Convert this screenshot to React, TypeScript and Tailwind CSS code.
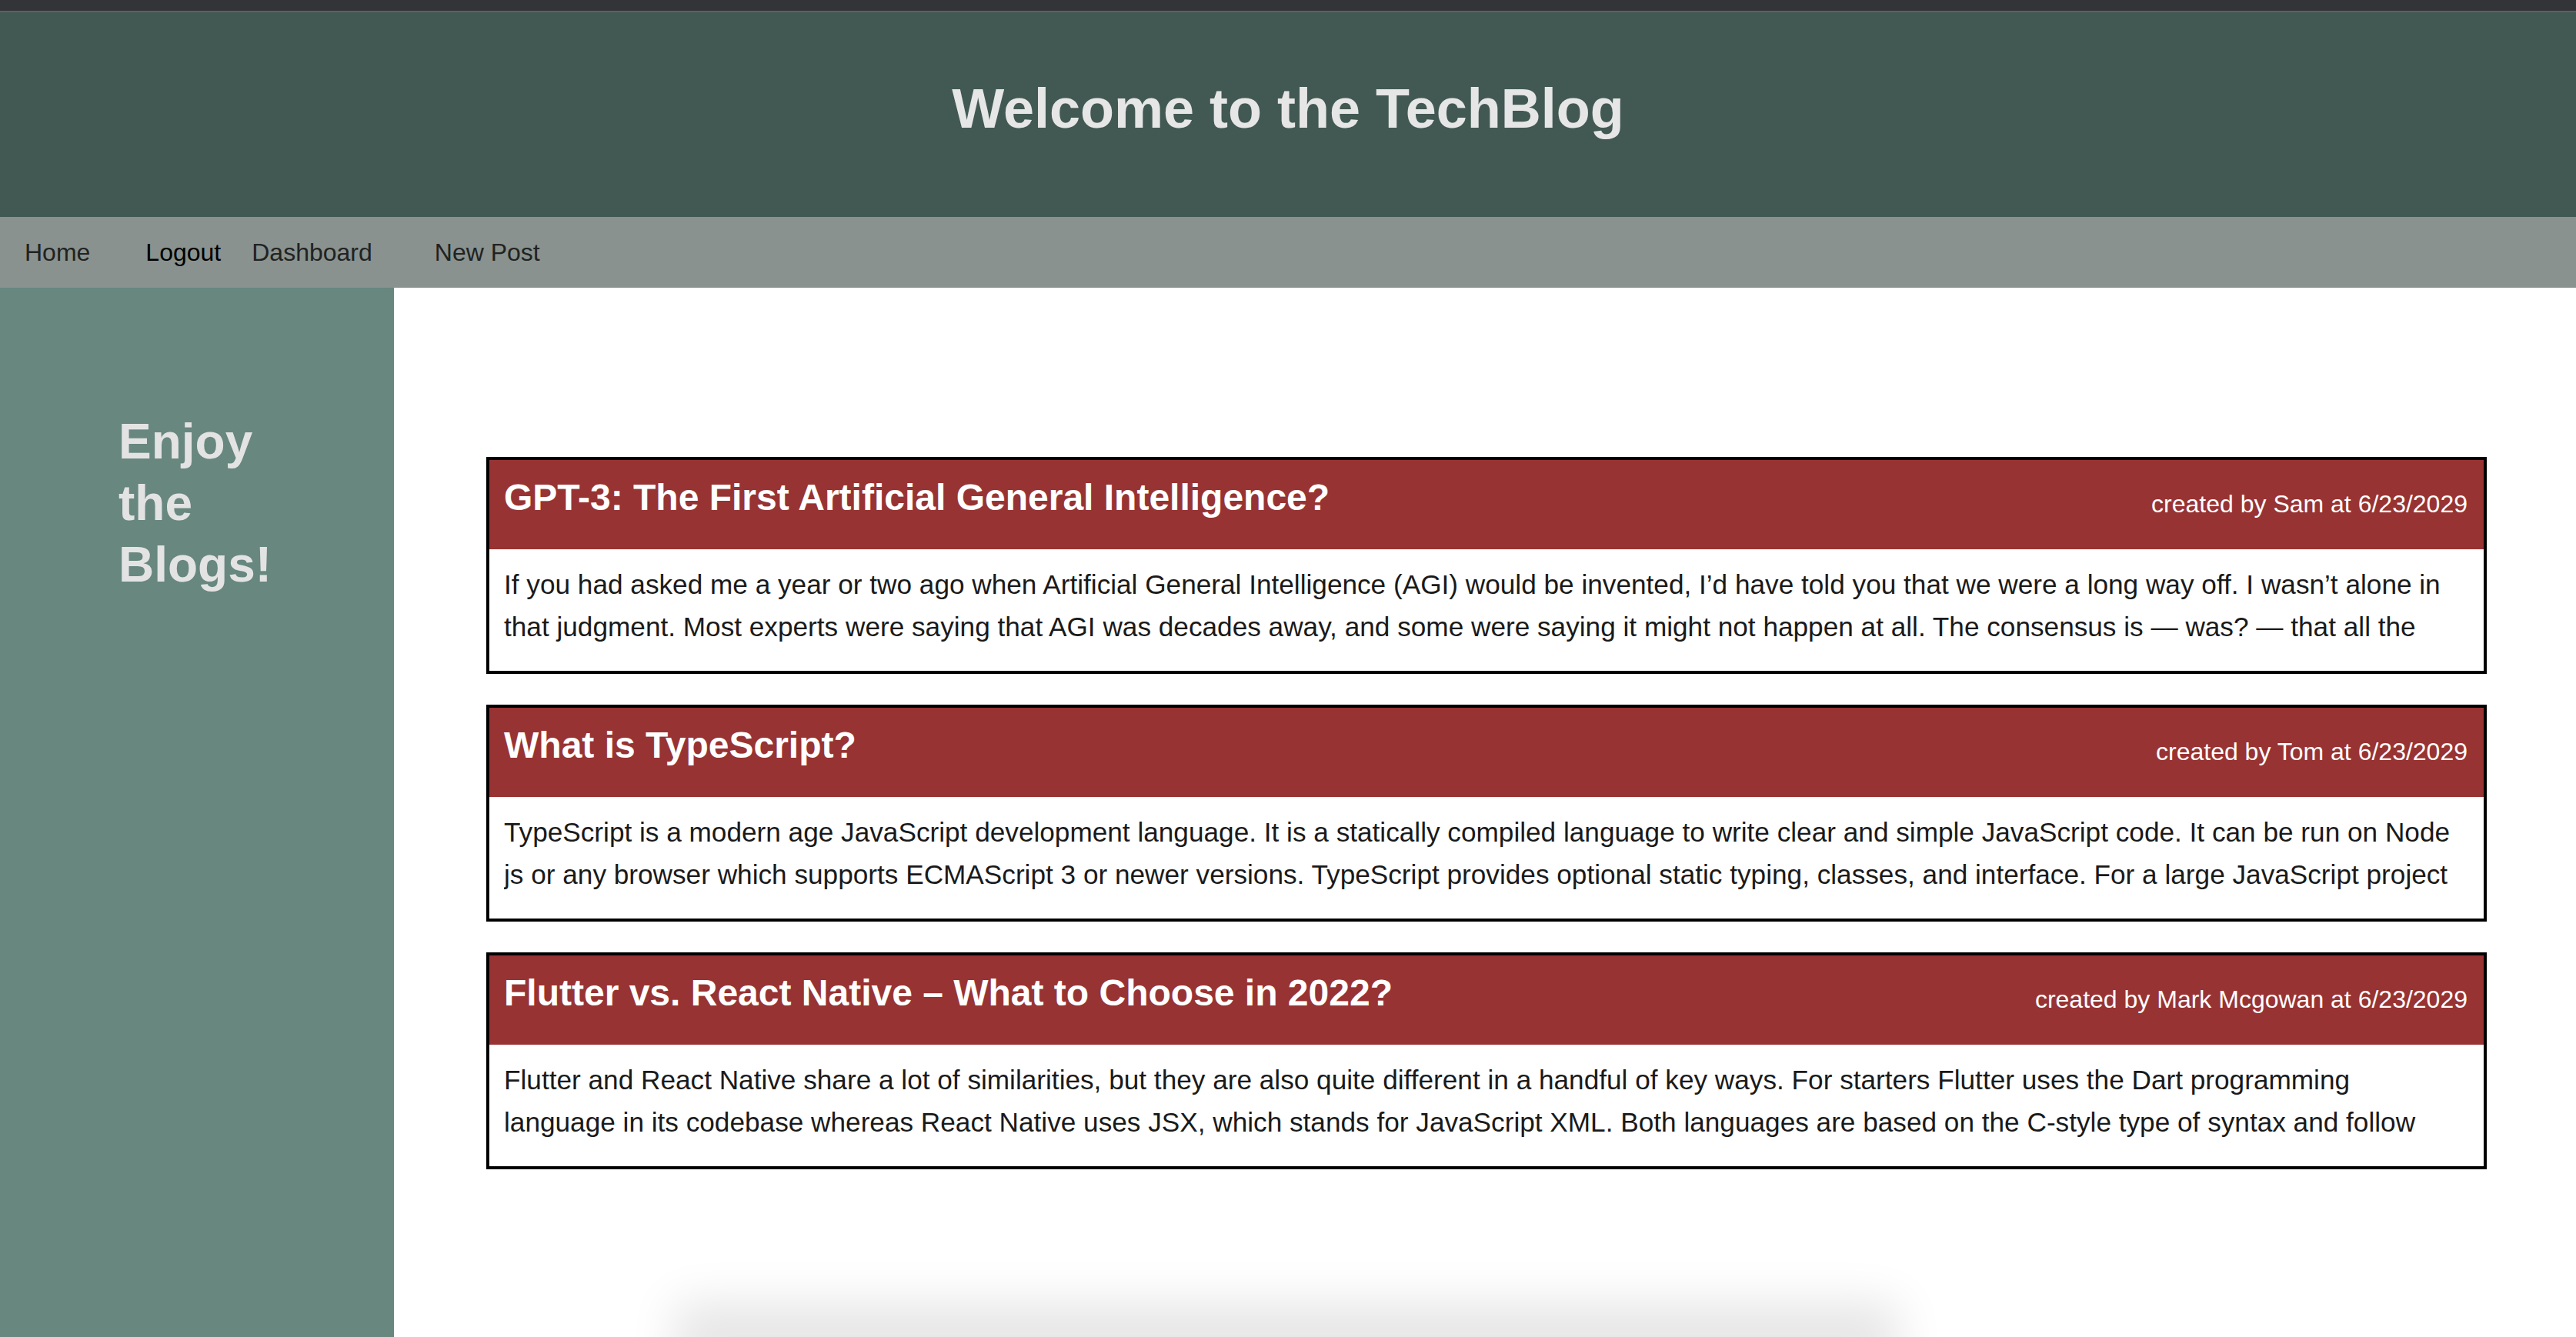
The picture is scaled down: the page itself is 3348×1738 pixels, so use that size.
import React from 'react';

type Post = {
  title: string;
  author: string;
  date: string;
  body: string;
};

const posts: Post[] = [
  {
    title: 'GPT-3: The First Artificial General Intelligence?',
    author: 'Sam',
    date: '6/23/2029',
    body:
      'If you had asked me a year or two ago when Artificial General Intelligence (AGI) would be invented, I’d have told you that we were a long way off. I wasn’t alone in that judgment. Most experts were saying that AGI was decades away, and some were saying it might not happen at all. The consensus is — was? — that all the recent progress in AI concerns so-called “narrow AI,” meaning systems that can only perform one specific task.',
  },
  {
    title: 'What is TypeScript?',
    author: 'Tom',
    date: '6/23/2029',
    body:
      'TypeScript is a modern age JavaScript development language. It is a statically compiled language to write clear and simple JavaScript code. It can be run on Node js or any browser which supports ECMAScript 3 or newer versions. TypeScript provides optional static typing, classes, and interface. For a large JavaScript project adopting TypeScript might result in more robust software, while still being deployable where a regular JavaScript application would run.',
  },
  {
    title: 'Flutter vs. React Native – What to Choose in 2022?',
    author: 'Mark Mcgowan',
    date: '6/23/2029',
    body:
      'Flutter and React Native share a lot of similarities, but they are also quite different in a handful of key ways. For starters Flutter uses the Dart programming language in its codebase whereas React Native uses JSX, which stands for JavaScript XML. Both languages are based on the C-style type of syntax and follow the object-oriented programming principles.',
  },
];

const PostCard: React.FC<{ post: Post }> = ({ post }) => (
  <article className="border-4 border-black bg-white">
    <div className="flex justify-between items-end bg-[#983333] pt-[21px] pb-[40px] pl-[19px] pr-[21px] text-white">
      <h2 className="text-[48px] leading-[55px] font-bold">{post.title}</h2>
      <p className="text-[32px] leading-[37px] whitespace-nowrap">
        created by {post.author} at {post.date}
      </p>
    </div>
    <div className="pt-[18px] pb-[30px] pl-[19px] pr-[33px]">
      {/* only two lines of the post show, the rest is cut */}
      <p className="h-[110px] overflow-hidden text-[35.2px] leading-[55px] text-[#1a1a1a]">{post.body}</p>
    </div>
  </article>
);

const App: React.FC = () => {
  return (
    <div className="min-h-screen bg-white font-['Liberation_Sans',Arial,sans-serif]">
      <div className="h-[14px] bg-[#333438]" />
      <div className="h-[2px] bg-[#5f6063]" />

      <header className="bg-[#425953] pt-[84px] pb-[99px] text-center">
        <h1 className="text-[72px] leading-[83px] font-bold text-[#e6e6e6]">Welcome to the TechBlog</h1>
      </header>

      <nav className="flex items-center h-[92px] bg-[#89928e] pl-[32px] text-[32px] leading-[37px]">
        <a href="#" className="text-[#222]">Home</a>
        <button className="ml-[72px] text-black">Logout</button>
        <a href="#" className="ml-[40px] text-[#222]">Dashboard</a>
        <a href="#" className="ml-[81px] text-[#222]">New Post</a>
      </nav>

      <div className="flex min-h-[1364px]">
        <aside className="w-[512px] shrink-0 bg-[#67877f] pt-[160px] pl-[154px]">
          <h3 className="w-[240px] text-[64px] leading-[80px] font-bold text-[#e3e3e3]">Enjoy the Blogs!</h3>
        </aside>

        <main className="flex flex-1 flex-col pt-[220px] pl-[120px] pr-[116px]">
          <div className="flex flex-col gap-[40px]">
            {posts.map((post) => (
              <PostCard key={post.title} post={post} />
            ))}
          </div>
          <div className="mt-auto ml-[290px] w-[1500px] h-0 shadow-[0_0_60px_45px_rgba(0,0,0,0.1)]" />
        </main>
      </div>
    </div>
  );
};

export default App;
